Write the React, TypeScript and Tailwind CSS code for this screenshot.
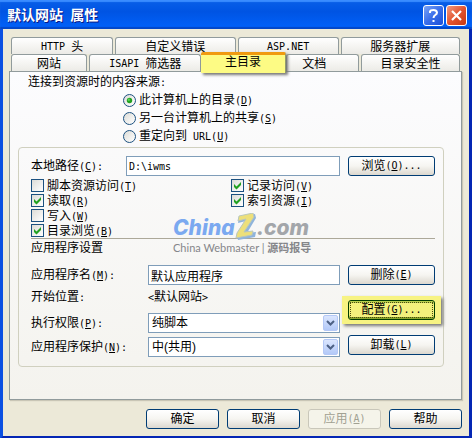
import React, { useState } from 'react'
import clsx from 'clsx';

// Splits "名称(&N):" into CJK and Latin runs, the character after & gets underlined
const Caption = ({ text }: { text: string }) => {
  const parts = text.split(/([\x20-\x7e]+)/).filter(Boolean);
  return (
    <>
      {parts.map((part, i) => {
        if (!/^[\x20-\x7e]/.test(part)) return <span key={i}>{part}</span>;
        const at = part.indexOf('&');
        return (
          <span key={i} className="whitespace-pre font-['DejaVu_Sans_Mono',monospace] text-[10px]">
            {at < 0 ? part : (
              <>
                {part.slice(0, at)}
                <u>{part[at + 1]}</u>
                {part.slice(at + 2)}
              </>
            )}
          </span>
        );
      })}
    </>
  );
};

const PushButton = ({ text, className, disabled, focused }: {
  text: string;
  className?: string;
  disabled?: boolean;
  focused?: boolean;
}) => (
  <button
    type="button"
    disabled={disabled}
    className={clsx(
      'flex h-5 shrink-0 items-center justify-center rounded-[3px] border whitespace-nowrap',
      disabled && 'border-[#c9c7ba] bg-[#f5f4ea] text-[#a1a192]',
      focused && 'border-[#003c00] bg-[#f3f17c] p-px shadow-[inset_0_2px_0_#b9d04e,inset_0_-2px_0_#8aa52c]',
      !disabled && !focused && 'border-[#003c74] bg-linear-to-b from-white via-[#f6f5f1] to-[#dcd8cf]',
      className,
    )}
  >
    {focused ? (
      <span className="flex h-full w-full items-center justify-center border border-dotted border-[#4c4c10]">
        <Caption text={text} />
      </span>
    ) : <Caption text={text} />}
  </button>
);

const CheckOption = ({ text, defaultChecked }: { text: string; defaultChecked?: boolean }) => (
  <label className="flex h-[15px] items-center gap-[3px]">
    <span className="relative flex">
      <input
        type="checkbox"
        defaultChecked={defaultChecked}
        className="peer h-[13px] w-[13px] appearance-none border border-[#1c5180] bg-linear-to-br from-[#dcdcd7] to-white"
      />
      <svg viewBox="0 0 13 13" className="pointer-events-none absolute inset-0 hidden h-[13px] w-[13px] peer-checked:block">
        <path d="M3 5v3l2.500 2.500L10 6V3L5.500 7.500z" fill="#21a121" />
      </svg>
    </span>
    <span className="h-[14px]"><Caption text={text} /></span>
  </label>
);

const RadioOption = ({ text, checked, onChange }: { text: string; checked: boolean; onChange: () => void }) => (
  <label className="flex h-[18px] items-center gap-[3px]">
    <span className="relative flex">
      <input
        type="radio"
        name="source"
        checked={checked}
        onChange={onChange}
        className="peer h-[13px] w-[13px] appearance-none rounded-full border border-[#1c5180] bg-linear-to-br from-[#dcdcd7] to-white"
      />
      <svg viewBox="0 0 13 13" className="pointer-events-none absolute inset-0 hidden h-[13px] w-[13px] peer-checked:block">
        <circle cx="6.500" cy="6.500" r="2.700" fill="#21a121" />
        <circle cx="5.800" cy="5.800" r="1.200" fill="#55d551" />
      </svg>
    </span>
    <span className="h-[14px]"><Caption text={text} /></span>
  </label>
);

const Dropdown = ({ id, options }: { id: string; options: string[] }) => (
  <div className="relative flex min-w-0 flex-1">
    <select id={id} className="h-5 w-full appearance-none border border-[#7f9db9] bg-white pl-[3px]">
      {options.map((option) => <option key={option}>{option}</option>)}
    </select>
    <span className="pointer-events-none absolute inset-y-[2px] right-[2px] flex w-[15px] items-center justify-center rounded-[2px] border border-[#b4c8f6] bg-linear-to-b from-[#dbe6fe] to-[#b3c9f8]">
      <svg viewBox="0 0 9 6" className="h-[6px] w-[9px]">
        <path d="M1 1l3.500 3.500L8 1" fill="none" stroke="#4d6185" strokeWidth="2" />
      </svg>
    </span>
  </div>
);

const Tab = ({ text, className }: { text: string; className: string }) => (
  <button
    type="button"
    role="tab"
    aria-selected={false}
    className={clsx('flex h-[17px] grow items-center justify-center rounded-t-[3px] border border-b-0 border-[#919b9c] bg-linear-to-b from-white to-[#ecebe6] pt-px whitespace-nowrap', className)}
  >
    <Caption text={text} />
  </button>
);

const Watermark = () => (
  <div className="pointer-events-none absolute bottom-[-16px] left-[142px] select-none whitespace-nowrap">
    <div className="flex h-[26px] items-end font-[Inter,sans-serif] text-[21px] leading-[26px] font-extrabold italic">
      <span className="text-[#7ba9f0]">China</span>
      <svg viewBox="0 0 24 28" className="-mx-px h-7 w-6">
        <path d="M5 4L21 1l1 4-9 15 9-1-1 5-17 3-1-4 9-15-8 2z" fill="#8fb4dc" />
        <path d="M5 3L19 0l1 4-10 15 9-1-1 4-16 3 1-5 9-14-8 2z" fill="#ede07a" stroke="#b9c7bd" strokeWidth="1" />
      </svg>
      <span className="text-[#a3a6aa]">.com</span>
    </div>
    <div className="font-[Lato,'Noto_Sans_CJK_SC',sans-serif] text-[11px] leading-[14px] text-[#85868a]">
      China Webmaster | <span className="font-bold">源码报导</span>
    </div>
  </div>
);

const sources = ['此计算机上的目录(&D)', '另一台计算机上的共享(&S)', '重定向到 URL(&U)'];

export default function App() {
  const [source, setSource] = useState(0);

  return (
    <div className="flex min-h-screen flex-col border-x-[3px] border-b-[3px] border-r-[#0426b4] border-b-[#0426b4] border-l-[#0b50e2] bg-[#ece9d8] font-['Liberation_Sans','Noto_Sans_CJK_SC',sans-serif] text-[12px] leading-[14px] text-black">
      {/* Title bar */}
      <header className="-mx-[3px] flex h-[29px] items-center gap-[2px] bg-linear-to-b from-[#0a5fe8] via-[#0054e3] via-40% to-[#0162fb] pt-[2px] pr-[5px] pl-[7px] shadow-[inset_0_2px_1px_#3a8cff,inset_0_-2px_1px_#0347c8]">
        <h1 className="flex-1 text-[14px] leading-5 font-bold whitespace-pre text-white [text-shadow:1px_1px_#0a1883]">
          默认网站<span className="font-['DejaVu_Sans_Mono',monospace] text-[12px]"> </span>属性
        </h1>
        <button type="button" aria-label="帮助" className="flex h-[21px] w-[21px] items-center justify-center rounded-[3px] border border-white bg-linear-to-br from-[#7aa2f5] via-[#3a6eea] to-[#1c50d8]">
          <svg viewBox="0 0 19 19" className="h-[19px] w-[19px]">
            <path d="M6 7V5.500Q6.500 4 9.500 4T13 6.500Q13 8 11.300 9T9.500 12" fill="none" stroke="white" strokeWidth="2" />
            <path d="M8.500 14h2v2h-2z" fill="white" />
          </svg>
        </button>
        <button type="button" aria-label="关闭" className="flex h-[21px] w-[21px] items-center justify-center rounded-[3px] border border-white bg-linear-to-br from-[#f0997f] via-[#e2542f] to-[#c8380f]">
          <svg viewBox="0 0 19 19" className="h-[19px] w-[19px]">
            <path d="M5 5l9 9M14 5l-9 9" stroke="white" strokeWidth="2.200" />
          </svg>
        </button>
      </header>

      <main className="flex flex-1 flex-col pt-2 pr-[7px] pb-[7px] pl-[6px]">
        {/* Tabs */}
        <div role="tablist" className="px-[2px]">
          <div className="flex gap-[2px]">
            <Tab text="HTTP 头" className="basis-[102px]" />
            <Tab text="自定义错误" className="basis-[120px]" />
            <Tab text="ASP.NET" className="basis-[101px]" />
            <Tab text="服务器扩展" className="basis-[119px]" />
          </div>
          <div className="flex">
            <Tab text="网站" className="mr-[2px] basis-[76px]" />
            <Tab text="ISAPI 筛选器" className="basis-[112px]" />
            <button
              type="button"
              role="tab"
              aria-selected
              className="relative z-10 -my-[2px] flex grow basis-[84px] items-center justify-center rounded-t-[2px] border-t-[3px] border-r border-t-[#f09a10] border-r-[#919b6c] bg-[#fdfb84] pb-1 shadow-[2px_2px_3px_#777]"
            >
              主目录
            </button>
            <Tab text="文档" className="mr-[2px] basis-[73px] pr-4" />
            <Tab text="目录安全性" className="basis-[99px]" />
          </div>
        </div>

        {/* Home directory page */}
        <section className="flex-1 border border-[#919b9c] bg-linear-to-b from-[#fcfcfe] to-[#f4f3ee] px-2 pt-[3px] pb-8 shadow-[1px_1px_1px_#c9c6b6]">
          <fieldset>
            <legend className="ml-[10px] h-[14px]"><Caption text="连接到资源时的内容来源:" /></legend>
            <div className="mt-[2px] ml-[105px]">
              {sources.map((text, i) => (
                <RadioOption key={text} text={text} checked={source === i} onChange={() => setSource(i)} />
              ))}
            </div>
          </fieldset>

          <div className="mt-[2px] mr-[9px] rounded-[4px] border border-[#d0d0bf] px-2 pt-2 pb-[9px] pl-3">
            <div className="flex items-center gap-2">
              <div className="flex min-w-0 flex-1 items-center">
                <label htmlFor="path" className="h-[14px] w-[95px]"><Caption text="本地路径(&C):" /></label>
                <input id="path" defaultValue="D:\iwms" className="h-5 min-w-0 flex-1 border border-[#7f9db9] bg-white px-[2px] font-['DejaVu_Sans_Mono',monospace] text-[10px]" />
              </div>
              <PushButton text="浏览(&O)..." className="w-[87px]" />
            </div>

            <div className="mt-[2px] flex">
              <div className="w-[200px]">
                <CheckOption text="脚本资源访问(&T)" />
                <CheckOption text="读取(&R)" defaultChecked />
                <CheckOption text="写入(&W)" />
                <CheckOption text="目录浏览(&B)" defaultChecked />
              </div>
              <div>
                <CheckOption text="记录访问(&V)" defaultChecked />
                <CheckOption text="索引资源(&I)" defaultChecked />
              </div>
            </div>

            <div className="relative border-t border-[#aca899]">
              <Watermark />
            </div>
            <h2 className="mt-[2px]">应用程序设置</h2>

            <div className="mt-[10px] flex gap-2">
              <div className="min-w-0 flex-1">
                <div className="flex items-center">
                  <label htmlFor="app" className="h-[14px] w-[117px]"><Caption text="应用程序名(&M):" /></label>
                  <input id="app" defaultValue="默认应用程序" className="h-5 min-w-0 flex-1 border border-[#7f9db9] bg-white px-[2px]" />
                </div>
                <div className="mt-[5px] flex h-[14px]">
                  <span className="w-[117px]"><Caption text="开始位置:" /></span>
                  <span><Caption text="<默认网站>" /></span>
                </div>
                <div className="mt-[9px] flex items-center">
                  <label htmlFor="exec" className="h-[14px] w-[117px]"><Caption text="执行权限(&P):" /></label>
                  <Dropdown id="exec" options={['纯脚本', '无', '脚本和可执行文件']} />
                </div>
                <div className="mt-1 flex items-center">
                  <label htmlFor="protect" className="h-[14px] w-[117px]"><Caption text="应用程序保护(&N):" /></label>
                  <Dropdown id="protect" options={['中(共用)', '低(IIS 进程)', '高(独立)']} />
                </div>
              </div>
              <div className="flex flex-col">
                <PushButton text="删除(&E)" className="w-[87px]" />
                <div className="-mx-[6px] mt-[11px] bg-[#f7f383] px-[6px] py-1 shadow-[2px_2px_3px_#777]">
                  <PushButton text="配置(&G)..." className="w-[87px]" focused />
                </div>
                <PushButton text="卸载(&L)" className="mt-[11px] w-[87px]" />
              </div>
            </div>
          </div>
        </section>

        {/* Dialog buttons */}
        <footer className="mt-[9px] flex justify-end gap-2">
          <PushButton text="确定" className="w-[73px]" />
          <PushButton text="取消" className="w-[73px]" />
          <PushButton text="应用(&A)" className="w-[73px]" disabled />
          <PushButton text="帮助" className="w-[73px]" />
        </footer>
      </main>
    </div>
  );
}
